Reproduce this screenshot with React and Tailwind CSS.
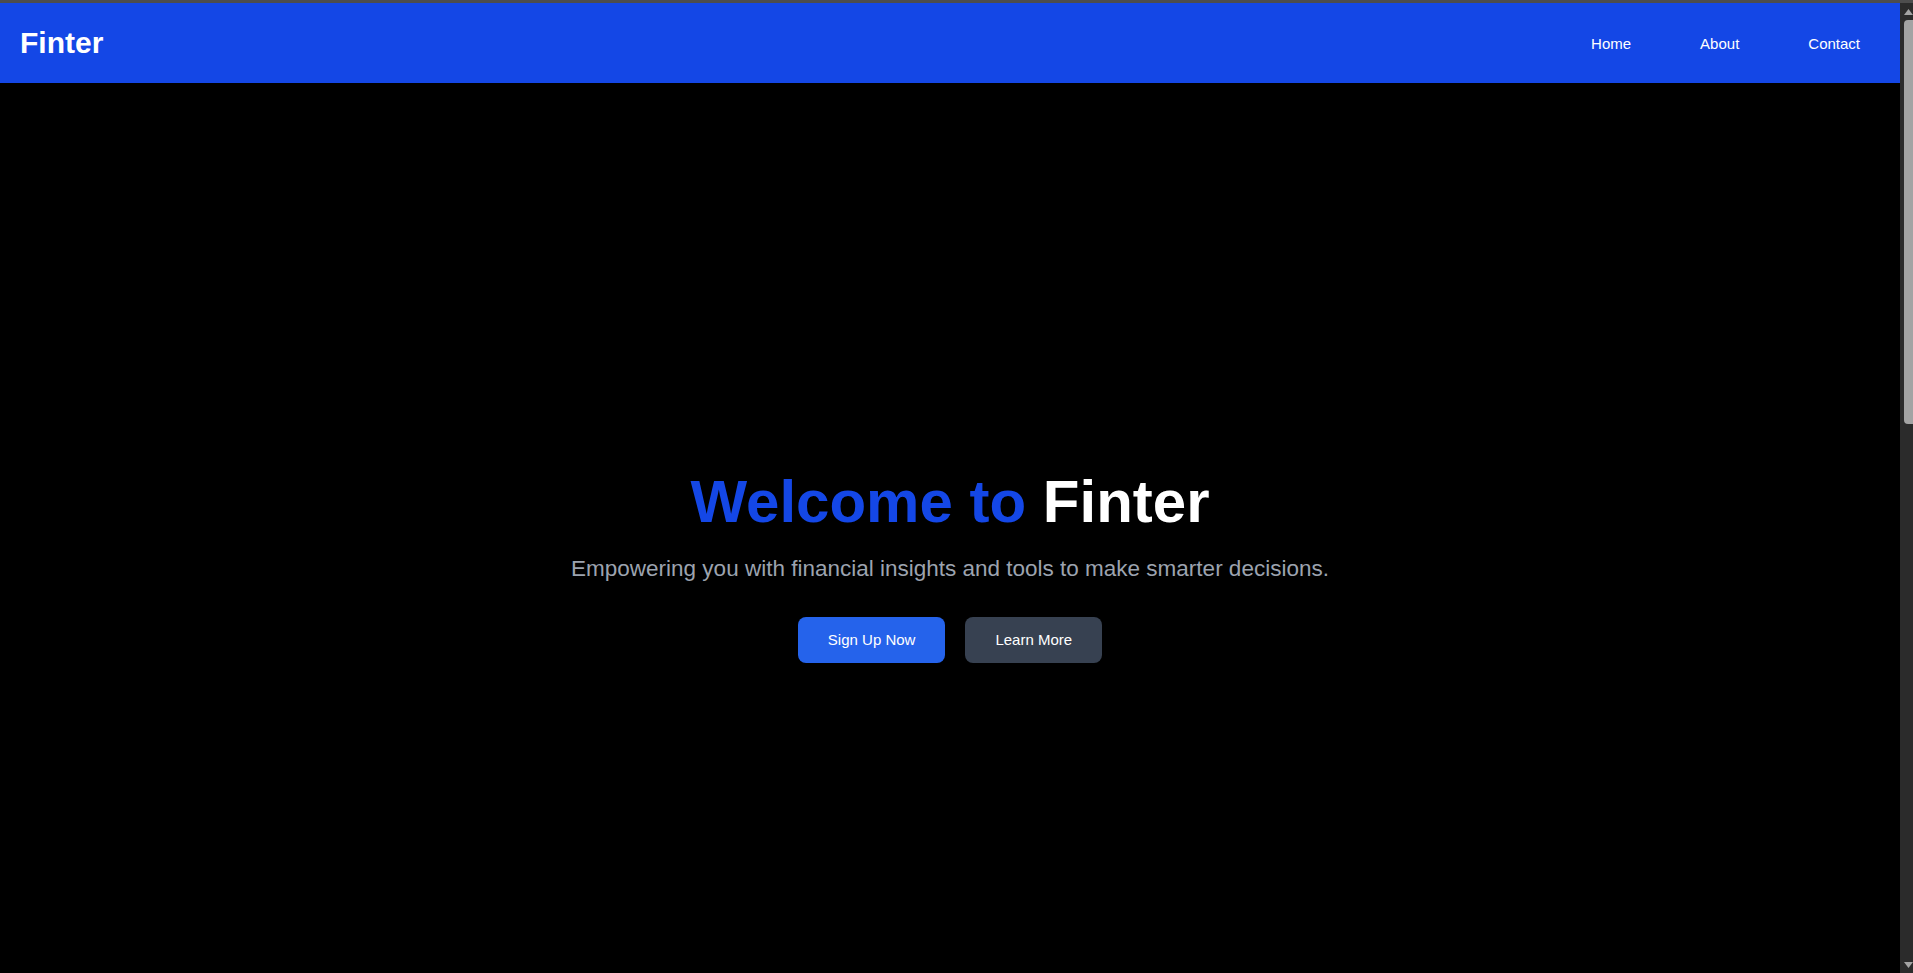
export default function App() {
  return (
    <div className="h-screen overflow-hidden flex flex-col bg-black font-['Liberation_Sans',Arial,sans-serif]">
      <div className="h-[3px] bg-[#4d4d4d] shrink-0" />
      <div className="flex flex-1 min-h-0">
        <div className="flex-1 flex flex-col">
          <header className="h-20 bg-blue-700 flex items-center justify-between pl-5 pr-10 shrink-0">
            <h1 className="text-3xl font-bold text-white">Finter</h1>
            <nav className="flex gap-[69px] pt-[2px] text-[15px] text-white">
              <a href="#">Home</a>
              <a href="#">About</a>
              <a href="#">Contact</a>
            </nav>
          </header>
          <section className="flex flex-col items-center pt-[389px]">
            <h2 className="text-6xl font-bold leading-none">
              <span className="text-blue-700">Welcome to</span>{" "}
              <span className="text-white">Finter</span>
            </h2>
            <p className="mt-[21px] text-[22.5px] leading-[31px] text-[#9ca3af]">
              Empowering you with financial insights and tools to make smarter decisions.
            </p>
            <div className="mt-[33px] flex gap-5">
              <button className="h-[46px] px-[30px] rounded-lg bg-[#2563eb] text-white text-[15px]">
                Sign Up Now
              </button>
              <button className="h-[46px] px-[30px] rounded-lg bg-[#374151] text-white text-[15px]">
                Learn More
              </button>
            </div>
          </section>
        </div>
        {/* fake browser scrollbar */}
        <div className="w-[13px] bg-[#2b2b2b] flex flex-col items-end shrink-0">
          <div className="h-[17px] w-[9px] flex items-center justify-center">
            <svg width="9" height="6" viewBox="0 0 9 6">
              <path d="M0 6 L4.5 0 L9 6 Z" fill="#a3a3a3" />
            </svg>
          </div>
          <div className="h-[404px] w-[9px] rounded-l-[4px] bg-[#a3a3a3]" />
          <div className="flex-1" />
          <div className="h-[17px] w-[9px] flex items-center justify-center">
            <svg width="9" height="6" viewBox="0 0 9 6">
              <path d="M0 0 L4.5 6 L9 0 Z" fill="#a3a3a3" />
            </svg>
          </div>
        </div>
      </div>
    </div>
  );
}
